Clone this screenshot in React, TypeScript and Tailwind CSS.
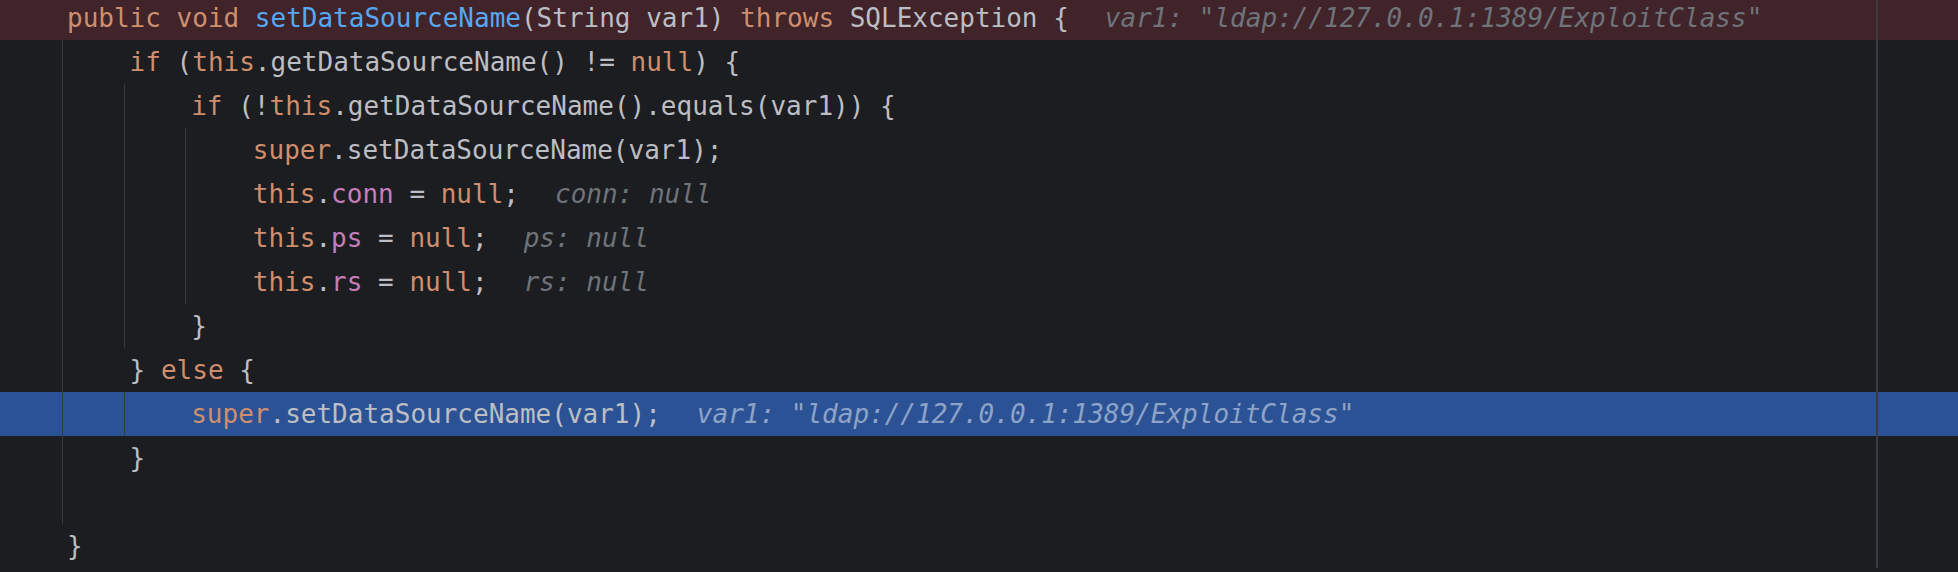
import React from 'react';

type Tok = { t: string; c?: 'kw' | 'fn' | 'fd' };
type Line = {
  level: number;
  guides: number;
  toks: Tok[];
  hint?: string;
  bg?: 'err' | 'exec';
};

const kw = (t: string): Tok => ({ t, c: 'kw' });
const tx = (t: string): Tok => ({ t });

const LINES: Line[] = [
  {
    level: 0,
    guides: 0,
    bg: 'err',
    toks: [kw('public void '), { t: 'setDataSourceName', c: 'fn' }, tx('(String var1) '), kw('throws'), tx(' SQLException {')],
    hint: 'var1: "ldap://127.0.0.1:1389/ExploitClass"',
  },
  { level: 1, guides: 1, toks: [kw('if'), tx(' ('), kw('this'), tx('.getDataSourceName() != '), kw('null'), tx(') {')] },
  { level: 2, guides: 2, toks: [kw('if'), tx(' (!'), kw('this'), tx('.getDataSourceName().equals(var1)) {')] },
  { level: 3, guides: 3, toks: [kw('super'), tx('.setDataSourceName(var1);')] },
  { level: 3, guides: 3, toks: [kw('this'), tx('.'), { t: 'conn', c: 'fd' }, tx(' = '), kw('null'), tx(';')], hint: 'conn: null' },
  { level: 3, guides: 3, toks: [kw('this'), tx('.'), { t: 'ps', c: 'fd' }, tx(' = '), kw('null'), tx(';')], hint: 'ps: null' },
  { level: 3, guides: 3, toks: [kw('this'), tx('.'), { t: 'rs', c: 'fd' }, tx(' = '), kw('null'), tx(';')], hint: 'rs: null' },
  { level: 2, guides: 2, toks: [tx('}')] },
  { level: 1, guides: 1, toks: [tx('} '), kw('else'), tx(' {')] },
  {
    level: 2,
    guides: 2,
    bg: 'exec',
    toks: [kw('super'), tx('.setDataSourceName(var1);')],
    hint: 'var1: "ldap://127.0.0.1:1389/ExploitClass"',
  },
  { level: 1, guides: 1, toks: [tx('}')] },
  { level: 0, guides: 1, toks: [] },
  { level: 0, guides: 0, toks: [tx('}')] },
];

const tokClass = (c?: Tok['c']) =>
  c === 'kw' ? 'text-[#cf8e6d]' : c === 'fn' ? 'text-[#56a8f5]' : c === 'fd' ? 'text-[#c77dbb]' : 'text-[#bcbec4]';

const CodeLine: React.FC<{ line: Line }> = ({ line }) => {
  const cells = Math.max(line.level, line.guides);
  const bg = line.bg === 'err' ? 'bg-[#402429]' : line.bg === 'exec' ? 'bg-[#2b5294]' : '';
  return (
    <div className={`flex h-[44px] ${bg}`}>
      <div className="flex w-[1876px] shrink-0 items-stretch">
        <div className="w-[62px] shrink-0" />
        {Array.from({ length: cells }).map((_, i) => (
          <div
            key={i}
            className={`w-[4ch] shrink-0 ${i < line.guides ? 'border-l border-[#393b40]' : ''} ${i === 0 ? '' : '-ml-px'}`}
          />
        ))}
        <div className="flex items-center whitespace-pre pl-[5px]">
          {line.toks.map((tk, i) => (
            <span key={i} className={tokClass(tk.c)}>
              {tk.t}
            </span>
          ))}
          {line.hint && (
            <span className={`ml-[36px] italic ${line.bg === 'exec' ? 'text-[#8ea3c8]' : 'text-[#6f737a]'}`}>
              {line.hint}
            </span>
          )}
        </div>
      </div>
      <div className="w-[2px] shrink-0 bg-[#393b40]" />
      <div className="flex-1" />
    </div>
  );
};

export default function App() {
  return (
    <div
      className="h-[572px] w-[1958px] overflow-hidden bg-[#1c1d20] text-[26px] leading-[44px]"
      style={{ fontFamily: '"DejaVu Sans Mono", "Liberation Mono", monospace' }}
    >
      <div className="-mt-1">
        {LINES.map((l, i) => (
          <CodeLine key={i} line={l} />
        ))}
      </div>
    </div>
  );
}
